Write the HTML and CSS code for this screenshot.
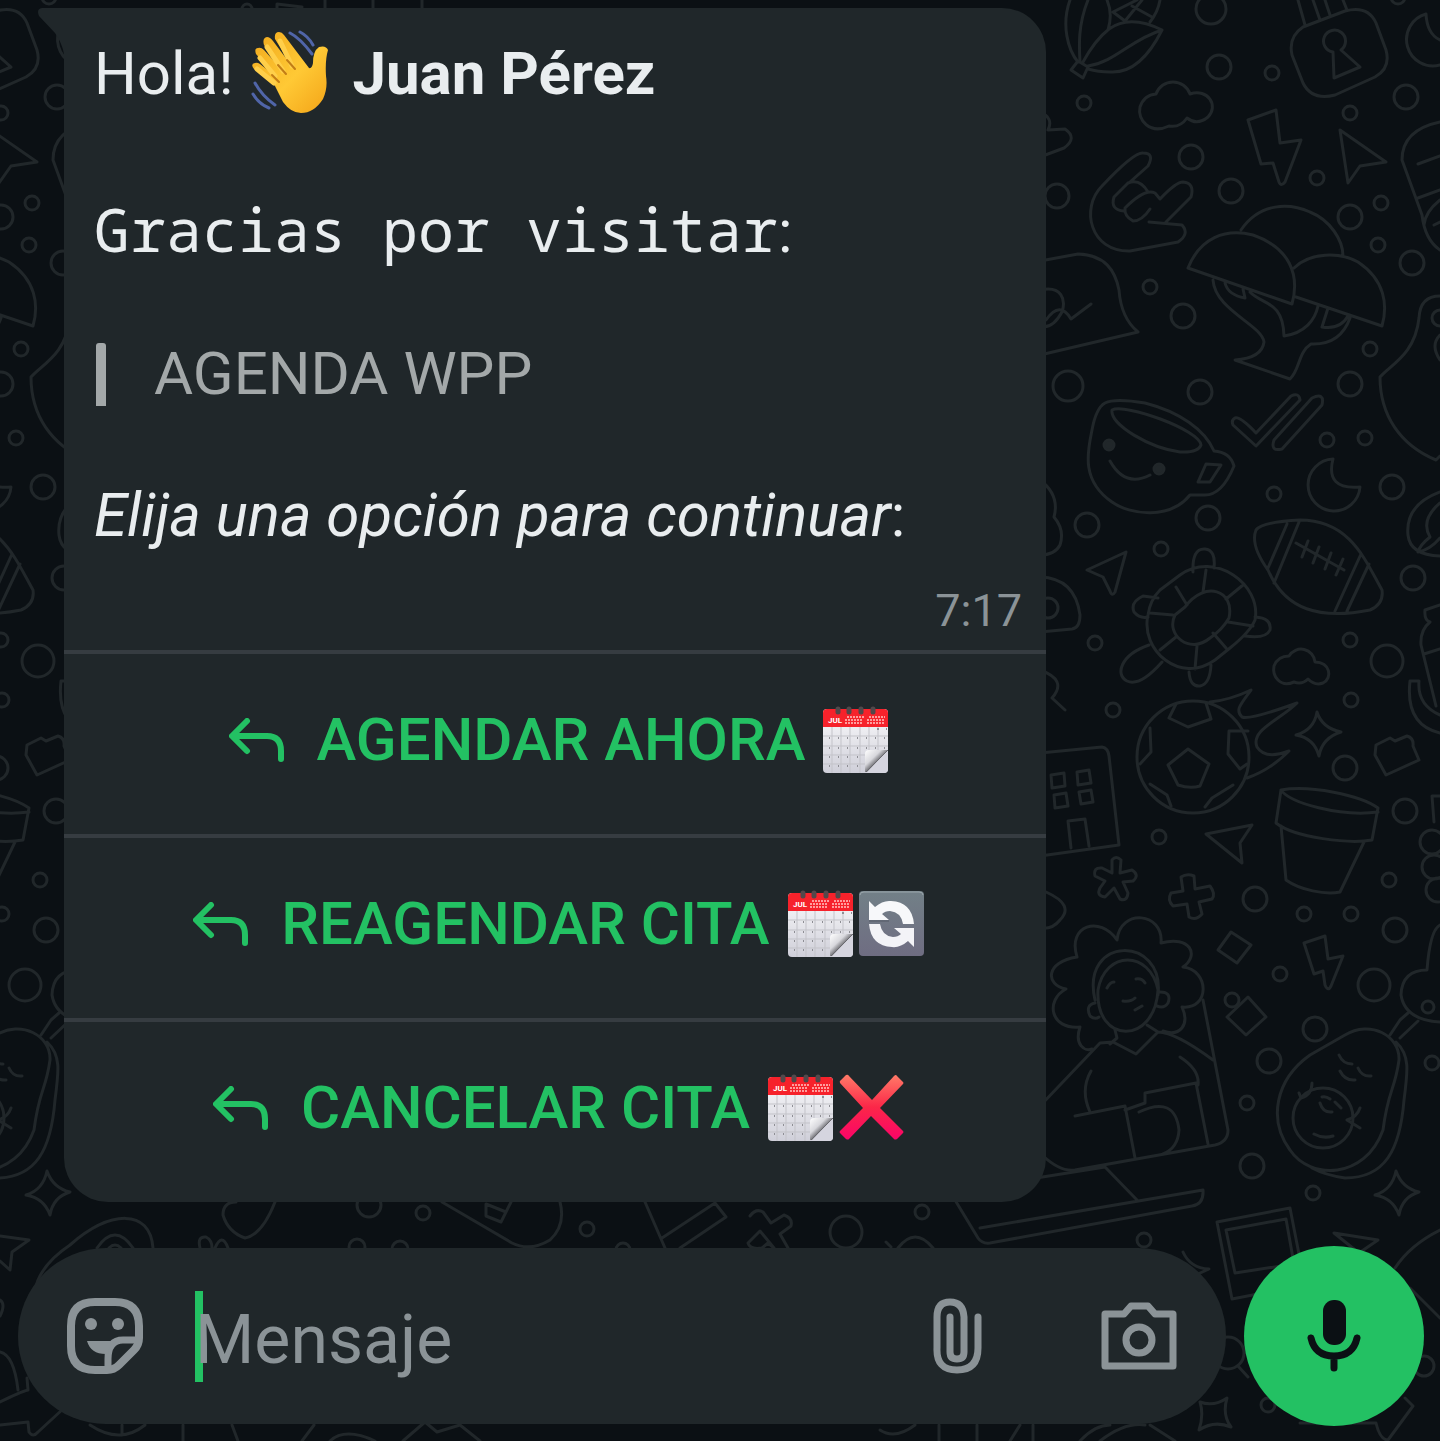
FILE: index.html
```html
<!DOCTYPE html>
<html lang="es">
  <head>
    <meta charset="UTF-8">
    <meta name="viewport" content="width=device-width, initial-scale=1.0">
    <title>Agenda WPP</title>
    <link rel="stylesheet" href="styles.css">
  </head>
  <body>
    <!-- wallpaper doodles -->
    <svg class="wallpaper" viewBox="0 0 1440 1441" preserveAspectRatio="xMinYMin slice" aria-hidden="true">
      <g id="doodles">
        <g>
          <circle cx="1211" cy="9" r="15"/><circle cx="1219" cy="67" r="12"/><circle cx="1272" cy="73" r="7"/><circle cx="1084" cy="103" r="7"/>
          <circle cx="1191" cy="157" r="12"/><circle cx="1406" cy="97" r="12"/><circle cx="1350" cy="113" r="7"/><circle cx="1317" cy="178" r="7"/>
          <circle cx="1231" cy="191" r="12"/><circle cx="1381" cy="203" r="7"/><circle cx="1350" cy="217" r="12"/><circle cx="1378" cy="245" r="7"/>
          <circle cx="1412" cy="263" r="12"/><circle cx="1057" cy="196" r="12"/><circle cx="1150" cy="287" r="7"/><circle cx="1183" cy="316" r="12"/>
          <circle cx="1370" cy="349" r="7"/><circle cx="1068" cy="386" r="15"/><circle cx="1200" cy="392" r="12"/><circle cx="1350" cy="384" r="12"/>
          <circle cx="1327" cy="440" r="7"/><circle cx="1365" cy="438" r="7"/><circle cx="1392" cy="487" r="12"/><circle cx="1274" cy="494" r="7"/>
          <circle cx="1208" cy="518" r="12"/><circle cx="1087" cy="525" r="12"/><circle cx="1161" cy="549" r="7"/><circle cx="1413" cy="578" r="12"/>
          <circle cx="1350" cy="640" r="7"/><circle cx="1387" cy="661" r="16"/><circle cx="1095" cy="643" r="7"/><circle cx="1113" cy="710" r="7"/>
          <circle cx="1351" cy="700" r="7"/><circle cx="1345" cy="768" r="12"/><circle cx="1159" cy="837" r="7"/><circle cx="1405" cy="811" r="12"/>
          <circle cx="1389" cy="880" r="7"/><circle cx="1255" cy="899" r="12"/><circle cx="1304" cy="914" r="7"/><circle cx="1351" cy="914" r="7"/>
          <circle cx="1395" cy="930" r="12"/><circle cx="1280" cy="974" r="7"/><circle cx="1374" cy="985" r="16"/><circle cx="1315" cy="1029" r="12"/>
          <circle cx="1269" cy="1061" r="12"/><circle cx="1247" cy="1103" r="7"/><circle cx="1252" cy="1166" r="12"/><circle cx="1313" cy="1193" r="7"/>
          <circle cx="1432" cy="1063" r="7"/><circle cx="1398" cy="-3" r="7"/>
        </g>
        <!-- corn, padlock, moon, cloud -->
        <path d="M1070 0C1061 25 1068 50 1078 62M1088 0C1078 25 1079 45 1080 62M1083 62Q1095 40 1109 29Q1130 14 1162 30Q1140 74 1110 72Q1098 72 1088 69M1088 66C1115 62 1130 40 1162 30M1107 0Q1113 14 1108 30M1078 61l10 6-5 11-12-8zM1160 0Q1158 12 1150 22M1137 0l-24 12 12 9L1142 0M1132 6l20 11"/>
        <path d="M1303 27l42-16Q1368 5 1376 23l10 27Q1391 68 1375 77l-40 18Q1312 101 1303 83l-11-28Q1288 37 1303 27zM1298 0l7 25M1313 0l7 20M1325 0l5 15M1343 0l4 10M1333 52l1 26 26-11-19-17A11 11 0 1 0 1333 52"/>
        <path d="M1440 65A26 26 0 1 1 1426 14Q1427 34 1440 40"/>
        <path d="M1156 94A18 18 0 0 1 1190 94C1208 88 1219 106 1208 117Q1197 126 1187 118Q1180 128 1169 126C1150 135 1137 120 1140 107Q1144 95 1156 94z"/>
        <!-- bolt, pointer, horns hand -->
        <path d="M1248 120l28-10 4 33 21-3-16 42Q1281 187 1279 182l-6-19-12 1zM1340 130l46 32-26 4-12 17z"/>
        <path d="M1130 182l18-16Q1155 153 1143 153Q1134 152 1102 186C1080 208 1090 252 1130 251l48-9Q1190 234 1182 225l-33-3M1166 222l25-25Q1195 183 1183 182Q1176 182 1160 199l-5-6Q1145 188 1125 208Q1124 216 1133 221Q1142 221 1150 209M1148 192Q1140 178 1128 183l-14 14Q1110 210 1124 211"/>
        <!-- mushrooms, hat, edges -->
        <path d="M1188 268C1200 238 1225 228 1253 235C1290 248 1300 275 1292 304zM1241 230C1260 202 1290 203 1310 212C1330 220 1343 240 1343 256M1294 268C1310 252 1340 252 1358 262C1385 280 1388 305 1382 326l-86-29M1213 280C1215 310 1262 325 1264 342Q1262 358 1235 360l55 19C1300 370 1298 352 1311 344C1335 345 1345 332 1350 318M1250 292C1262 305 1283 300 1284 336C1305 333 1315 320 1318 306M1225 283Q1228 295 1245 298l-2-9M1328 308l-6 19Q1340 330 1348 316"/>
        <path d="M1040 261l38-7C1105 255 1115 270 1119 290Q1121 318 1138 332l-98 23M1040 290C1062 285 1066 300 1062 312Q1052 330 1040 326M1046 320Q1060 300 1071 319l20-15M1040 112Q1054 118 1048 130l17-1Q1078 138 1064 148l-24 9"/>
        <path d="M1440 122Q1402 130 1402 160l20 55Q1425 240 1440 250M1418 164l22-8M1418 198l22-8M1440 200Q1425 212 1424 225M1434 225l6-3M1440 296Q1420 296 1419 318C1415 355 1390 365 1380 377C1380 415 1400 445 1436 460l4-4M1440 310a8 8 0 0 0 0 16M1440 335q-10 10 0 25"/>
        <!-- smiling cup -->
        <path d="M1105 403Q1115 398 1145 403C1180 412 1205 430 1214 451Q1230 452 1234 466Q1222 495 1205 495h-15C1170 520 1130 515 1112 502C1080 480 1088 450 1092 430Q1096 408 1105 403zM1112 410C1125 403 1200 430 1201 445Q1198 453 1180 452C1150 448 1110 425 1112 410zM1206 464l15 1-11 17h-12zM1110 461Q1125 488 1150 475"/>
        <circle class="dot" cx="1109" cy="445" r="5"/><circle class="dot" cx="1159" cy="469" r="5"/>
        <!-- ticks, moon, pointer -->
        <path d="M1235 418Q1240 416 1256 433l35-37Q1299 392 1300 400l-44 46-23-21Q1231 420 1235 418zM1312 398l-38 42Q1270 452 1282 449l40-44Q1325 392 1312 398zM1333 459A26 26 0 1 0 1360 487Q1325 490 1333 459zM1087 570l39-18-11 40Q1112 597 1110 591l-7-14z"/>
        <!-- turtle -->
        <path d="M1160 590l20-15C1215 550 1262 585 1255 620Q1250 632 1230 648l-15 12C1180 685 1140 650 1148 615Q1150 600 1160 590zM1185 607C1205 580 1235 590 1229 618Q1222 630 1210 638C1190 655 1165 635 1175 615zM1206 570l-3 22M1176 587l11 18M1150 613l23 2M1160 650l16-13M1195 669l2-23M1226 648l-13-15M1253 626l-25-4M1243 585l-17 14M1193 572Q1192 548 1205 549Q1216 550 1214 568M1158 598l-15-2Q1130 602 1134 612Q1140 619 1148 617M1255 617Q1272 618 1270 630Q1266 639 1245 636M1149 645C1120 655 1115 675 1127 681Q1140 687 1162 662M1189 672Q1190 687 1200 686Q1210 684 1211 665"/>
        <!-- rugby ball, cloud -->
        <path d="M1256 530Q1262 522 1300 520C1350 520 1365 560 1382 590Q1384 604 1370 610C1320 620 1285 610 1268 570Q1250 545 1256 530zM1287 524l-19 44M1299 522l-25 61M1361 554l-26 57M1369 564l-22 47M1296 543l48 27M1308 541l-6 16M1319 547l-6 16M1331 553l-6 16M1343 559l-7 16"/>
        <path d="M1289 656A14 14 0 0 1 1315 662C1330 662 1333 678 1323 683Q1315 686 1308 679Q1302 685 1294 682C1280 688 1272 676 1274 666Q1278 656 1289 656z"/>
        <!-- football on fire -->
        <circle cx="1193" cy="757" r="56"/>
        <path d="M1210 702Q1230 700 1251 690C1240 705 1235 710 1242 717Q1250 720 1297 703C1280 720 1250 730 1257 747Q1265 760 1289 751Q1270 770 1247 778M1188 749l21 15-9 22Q1190 789 1178 785l-10-20zM1176 704l-7 14 19 9 23-8-5-16M1150 728l1 24-11 12M1248 731h-19l-1 23 12 15 7-5M1150 784l17 11 4 11M1205 807l7-9 21-13"/>
        <path d="M1317 712Q1322 728 1341 732Q1322 738 1319 756Q1314 738 1296 735Q1314 730 1317 712zM1376 745l14-7 5 3 12-5Q1414 738 1413 746l6 14-33 15-11-20z"/>
        <!-- building and bits by the bubble -->
        <path d="M1040 753l62-6Q1108 748 1109 756l10 89-79 11M1051 775l13-2 1 13-13 2zM1077 772l12-2 2 13-13 2zM1054 795l12-2 2 13-13 2zM1079 792l12-2 2 12-12 2zM1071 848l-3-27 17-2 4 27M1040 480Q1060 495 1054 517Q1065 530 1060 545Q1055 555 1040 555M1040 577Q1075 578 1080 615Q1080 628 1072 629l-32 3M1040 670Q1068 680 1052 698l13 12M1046 892Q1075 905 1060 920Q1052 930 1040 928"/>
        <circle cx="1048" cy="608" r="10"/>
        <path d="M1425 610l15-5M1425 610Q1424 620 1430 622Q1420 630 1421 645l15 61M1424 654l16-5M1410 681h9Q1417 705 1440 715M1410 681Q1405 725 1440 733M1440 492Q1405 505 1408 535Q1410 555 1440 556M1440 503Q1420 520 1430 537Q1420 545 1418 552Q1430 550 1440 538"/>
        <!-- flowerpot, pointer, asterisk, plus -->
        <path d="M1281 790C1310 785 1360 795 1378 808l-6 32C1350 844 1295 838 1276 823zM1281 790C1290 803 1340 817 1378 812M1281 826l5 54C1300 890 1325 895 1340 892l24-50M1206 834l46-9-12 18 2 20z"/>
        <path d="M1112 860Q1116 855 1121 860l-1 13 12-3Q1140 875 1133 881l-10 1 5 11Q1127 902 1120 899l-6-11-9 9Q1096 896 1100 888l5-7-10-5Q1093 867 1102 868l10 5zM1181 877Q1187 873 1194 876l1 13 15-3Q1216 894 1212 899l-13 3 3 12Q1196 921 1189 917l-2-13-14 2Q1167 900 1171 893l12-2z"/>
        <path d="M1231 932l20 13-14 18-19-13zM1304 943l21-7 3 23 15-3-12 30Q1328 992 1325 985l-2-14-9 3zM1248 997l18 20-20 18-19-18z"/>
        <circle cx="1232" cy="1000" r="7"/><circle cx="1432" cy="842" r="12"/><circle cx="1434" cy="867" r="12"/><circle cx="1438" cy="890" r="12"/>
        <path d="M1440 796h-8l2 26"/>
        <!-- woman with laptop -->
        <path d="M1077 957C1067 925 1100 915 1117 940C1120 908 1164 912 1161 943C1190 935 1200 955 1183 967C1210 970 1210 1010 1182 1007C1190 1025 1180 1037 1163 1031M1077 957C1045 962 1045 985 1066 989C1045 1000 1050 1030 1080 1027C1074 1045 1085 1052 1092 1049M1095 1000C1080 935 1165 935 1158 995M1098 990C1105 950 1150 950 1158 990M1098 990C1095 1045 1155 1045 1158 990M1095 1003q-10 2-5 13 5 4 9 1M1160 992q12 0 8 11-4 6-11 3M1107 988q3-6 7-6M1136 979q6-1 9 4M1123 1001q8 1 12-3M1135 1010l7-4"/>
        <path d="M1040 1106l60-63 13-1 23 12 22-22M1115 1030l2 8-7 6M1147 1025l11 7Q1175 1032 1213 1060M1203 1000l25 130Q1228 1142 1215 1145l-140 25Q1060 1172 1042 1155M1075 1116l50-10 10 52M1125 1110l20-7v-10l51-10 12 61M1139 1112Q1175 1095 1179 1130Q1178 1148 1163 1154M1180 1057Q1200 1070 1198 1085M1091 1071Q1080 1090 1090 1112M1030 1179l75-12 32 33M980 1228l223-38Q1204 1204 1192 1206l-202 37Q982 1244 978 1238l-23-38"/>
        <!-- avocado -->
        <path d="M1310 1055l35-20C1370 1020 1400 1035 1399 1060C1395 1090 1388 1090 1383 1130C1365 1180 1310 1180 1290 1150C1268 1120 1275 1080 1310 1055zM1396 1042C1410 1055 1408 1070 1404 1100C1400 1150 1385 1178 1345 1178Q1325 1175 1312 1168M1390 1035l10-15 8-7M1400 1038l18-17M1339 1055q4 9 13 9M1340 1071q5 10 15 9M1358 1068q4 9 13 8M1312 1083q0 12-11 15l-2-5M1360 1108q-3 9-13 12l13 8M1320 1103q3 10 12 9M1322 1097q4-1 8 2M1335 1102l6 6M1314 1134q9 5 19 2"/>
        <circle cx="1323" cy="1118" r="30"/><circle cx="1428" cy="1007" r="6"/>
        <path d="M1440 925Q1430 930 1427 970Q1402 970 1401 995Q1405 1020 1440 1022M1396 1171Q1402 1188 1419 1192Q1402 1197 1399 1215Q1393 1198 1375 1195Q1392 1190 1396 1171z"/>
      </g>
      <use href="#doodles" x="-1349"/>
      <!-- strip round the composer -->
      <path d="M1217 1222l73-14 15 77-73 14zM1226 1230l60-11 8 45-59 9zM1334 1233l44 7-19 13zM1440 1230Q1410 1245 1395 1268M1410 1288l30 30M1183 1252Q1190 1268 1209 1269l-11 5M1238 1366l10 11M1200 1402Q1214 1407 1227 1398Q1222 1415 1231 1427Q1214 1420 1199 1430Q1204 1415 1200 1402zM1300 1423h76Q1380 1440 1388 1440l25-34-8-8"/>
      <path d="M898 1248Q915 1226 933 1248M886 1242l5 5M750 1216Q756 1208 763 1212l8 11 13-8Q793 1218 791 1226l-11 8 8 14M774 1248l-6-5-6 5Q750 1250 748 1243l12-12zM645 1202l20 46M662 1238l53-35 11 14-46 31M442 1202l70 41Q530 1252 550 1240Q566 1225 560 1202M486 1204l20 8-5 10-15-6zM506 1212l5-10M236 1202Q223 1202 223 1215Q228 1232 245 1238Q262 1235 275 1202"/>
      <path d="M35 1290Q40 1265 70 1245C110 1210 150 1208 153 1248M97 1248Q115 1222 133 1248M109 1248q6-6 12 0M200 1248Q197 1236 206 1237Q212 1240 212 1248M215 1248Q222 1232 228 1248M0 1236l29 4-17 12-2 18-10-9M0 1352Q14 1355 18 1390M0 1300q6 4 0 16M0 1402Q20 1392 28 1390l-1-12M0 1425l28-3 1 10Q33 1438 38 1432l25-23"/>
      <path d="M90 1425Q120 1445 145 1425M122 1425v10M183 1425v16M232 1425l6 16M314 1425l-12 16M330 1441Q345 1427 375 1441M403 1441l22-19 12 10 23-7 20 16M880 1430Q895 1440 915 1425M939 1425v16M977 1425v16M1020 1425l-10 16M1033 1425v16M1080 1441Q1095 1425 1110 1425M1100 1441Q1125 1422 1145 1425M1150 1425l25 16M277 8V4l25 3M325 0v8M373 0v8M422 0v8"/>
      <circle cx="587" cy="1229" r="7"/><circle cx="846" cy="1232" r="16"/><circle cx="922" cy="1212" r="7"/><circle cx="623" cy="1250" r="7"/>
      <circle cx="369" cy="1205" r="12"/><circle cx="423" cy="1213" r="7"/><circle cx="357" cy="1247" r="8"/><circle cx="400" cy="1249" r="8"/>
      <circle cx="1228" cy="1353" r="16"/><circle cx="1268" cy="1405" r="7"/><circle cx="1424" cy="1366" r="10"/><circle cx="1144" cy="1240" r="7"/><circle cx="247" cy="9" r="5"/>
    </svg>

    <!-- shared pictures -->
    <svg class="defs" aria-hidden="true">
      <defs>
        <linearGradient id="skin" x1="0" y1="0" x2="1" y2="1">
          <stop offset="0" stop-color="#f0a81c"/><stop offset=".55" stop-color="#ffc935"/><stop offset="1" stop-color="#f3a317"/>
        </linearGradient>
        <linearGradient id="paper" x1="0" y1="0" x2="0" y2="1">
          <stop offset="0" stop-color="#fbfbfc"/><stop offset="1" stop-color="#cfcfd9"/>
        </linearGradient>
        <linearGradient id="curl" x1="0" y1="0" x2="1" y2="1">
          <stop offset="0" stop-color="#fff"/><stop offset=".35" stop-color="#d8d8dd"/><stop offset=".52" stop-color="#77777c"/>
        </linearGradient>
        <linearGradient id="steel" x1="0" y1="0" x2="0" y2="1">
          <stop offset="0" stop-color="#728087"/><stop offset="1" stop-color="#6f6d82"/>
        </linearGradient>
        <linearGradient id="red" x1="0" y1="0" x2="0" y2="1">
          <stop offset="0" stop-color="#ff7b68"/><stop offset=".5" stop-color="#fb2748"/><stop offset="1" stop-color="#fa0468"/>
        </linearGradient>
        <symbol id="reply" viewBox="0 0 56 44">
          <path d="M18 3L3 18l15 15M4 18h34q14 0 14 15v8" fill="none" stroke="currentColor" stroke-width="6" stroke-linecap="round" stroke-linejoin="round"/>
        </symbol>
        <symbol id="calendar" viewBox="0 0 66 68">
          <rect x="0" y="3" width="65" height="64" rx="4" fill="url(#paper)"/>
          <path d="M0 21V7q0-4 4-4h57q4 0 4 4v14z" fill="#f6222b"/>
          <path d="M9 21v46M18 21v46M27 21v46M37 21v46M46 21v46M55 21v46M0 30h65M0 40h65M0 49h65M0 58h65" stroke="#c3c3c9" stroke-width="1"/>
          <path d="M54 23h2M63 23h1M6 32h1M15 32h1M24 32h1M34 32h1M43 32h1M52 32h1M61 32h1M6 42h1M15 42h1M24 42h1M34 42h1M43 42h1M52 42h1M61 42h1M6 51h1M15 51h1M24 51h1M34 51h1M6 60h1M15 60h1M24 60h1M34 60h1" stroke="#8e8e94" stroke-width="2"/>
          <path d="M24 11h17M22 14h18M22 17h18M46 11h16M44 14h17M44 17h17" stroke="#ff9d9d" stroke-width="2" stroke-dasharray="2 1"/>
          <path d="M42 66V48q0-4 4-4h19L48 66z" fill="url(#curl)"/>
          <path d="M65 44v19q0 4-4 4H43z" fill="#d5d5df"/>
          <path d="M65 44L43 66" stroke="#69696e" stroke-width="1"/>
          <path d="M15 3v3M26 3v3M38 3v3M50 3v3" stroke="#52484b" stroke-width="5" stroke-linecap="round"/>
        </symbol>
        <symbol id="refresh" viewBox="0 0 66 68">
          <rect x="0" y="1" width="65" height="65" rx="4" fill="url(#steel)"/>
          <path d="M1 5q0-3 4-3h55q4 0 4 3" fill="none" stroke="#9aa6ab" stroke-width="1"/>
          <path d="M10 11l6 6Q24 10 32 11 53 12 55 34H44Q42 22 31 21q-5 0-8 3l7 6H10z" fill="#f7f8fa"/>
          <path d="M55 57l-6-6Q41 58 33 57 12 56 10 34H21Q23 46 34 47q5 0 8-3l-7-6H55z" fill="#f3f3f7"/>
          <path d="M10 31h20" stroke="#555a66" stroke-width="1"/>
        </symbol>
        <symbol id="cross" viewBox="0 0 66 68">
          <path d="M1 9Q0 7 2 6l5-5q2-1 3 1l23 24L55 2q2-2 3 0l6 6q1 1 0 2L41 34l23 23q1 1 0 2l-6 6q-2 1-3 0L32 42 10 65q-1 1-3 0l-6-6q-1-1 0-2l23-23z" fill="url(#red)"/>
        </symbol>
      </defs>
    </svg>

    <main class="chat">
      <article class="bubble">
        <svg class="tail" viewBox="0 0 30 46" aria-hidden="true"><path d="M4 0h26v46h-4Q24 35 17 25L1 8Q-2 1 4 0z"/></svg>
        <div class="message">
          <p class="greeting">Hola!
            <svg class="wave" viewBox="0 0 78 84" role="img" aria-label="saludo">
              <path d="M39 3q10 5 22 21M49 2q8 4 13 13M4 53q7 13 20 22M2 64q6 10 16 14" fill="none" stroke="#5065a8" stroke-width="3" stroke-linecap="round"/>
              <path d="M23 54L3 39Q-1 34 4 33 6 32 9 34l15 12L5 24Q3 18 7 18q3-1 6 2l18 20L13 15Q11 8 16 7q3 0 6 4l18 24L24 9Q23 2 28 2q3 0 5 3l25 33q3 1 4-5 0-12 6-16 7-2 9 3-3 10-2 26 2 12-3 23Q63 83 50 83 40 83 32 72z" fill="url(#skin)"/>
              <path d="M23 53L6 39M24 46L9 28M32 41L16 17M41 36L29 11" fill="none" stroke="#ffcf4a" stroke-width="5" stroke-linecap="round"/>
              <path d="M21 45l7 7M27 35l8 9M36 30l8 9" fill="none" stroke="#c27d16" stroke-width="2" stroke-linecap="round"/>
            </svg>
            <strong>Juan Pérez</strong></p>
          <p><code>Gracias por visitar</code>:</p>
          <blockquote>AGENDA WPP</blockquote>
          <p><em>Elija una opción para continuar</em>:</p>
        </div>
        <time class="time">7:17</time>
        <div class="replies">
          <button type="button">
            <svg class="arrow" aria-hidden="true"><use href="#reply"/></svg>
            <span>AGENDAR AHORA</span>
            <span class="emojis"><svg aria-hidden="true"><use href="#calendar"/><text class="month" x="5" y="17">JUL</text></svg></span>
          </button>
          <button type="button">
            <svg class="arrow" aria-hidden="true"><use href="#reply"/></svg>
            <span>REAGENDAR CITA</span>
            <span class="emojis"><svg aria-hidden="true"><use href="#calendar"/><text class="month" x="5" y="17">JUL</text></svg><svg aria-hidden="true"><use href="#refresh"/></svg></span>
          </button>
          <button type="button">
            <svg class="arrow" aria-hidden="true"><use href="#reply"/></svg>
            <span>CANCELAR CITA</span>
            <span class="emojis"><svg aria-hidden="true"><use href="#calendar"/><text class="month" x="5" y="17">JUL</text></svg><svg aria-hidden="true"><use href="#cross"/></svg></span>
          </button>
        </div>
      </article>

      <form class="composer">
        <div class="field">
          <button type="button" class="icon" aria-label="Stickers">
            <svg width="76" height="76" viewBox="0 0 76 76" fill="none" stroke="currentColor" stroke-width="8" stroke-linejoin="round">
              <path d="M28 4h20q24 0 24 24v12q0 7-5 12L52 67q-5 5-12 5H28Q4 72 4 48V28Q4 4 28 4z"/>
              <path d="M41 72V61q0-19 15-19h16" stroke-width="7"/>
              <path d="M20 43h28q-6 5-7 13Q24 57 20 43z" fill="currentColor" stroke="none"/>
              <circle cx="24" cy="26" r="6" fill="currentColor" stroke="none"/>
              <circle cx="51" cy="26" r="6" fill="currentColor" stroke="none"/>
            </svg>
          </button>
          <label class="entry">
            <input type="text" placeholder="Mensaje" aria-label="Mensaje">
          </label>
          <button type="button" class="icon clip" aria-label="Adjuntar">
            <svg width="50" height="76" viewBox="0 0 50 76" fill="none" stroke="currentColor" stroke-width="7" stroke-linecap="round">
              <path d="M45 19v31q0 22-21 22T4 50V19Q4 4 17 4t14 15v35q0 7-7 7t-7-7V19"/>
            </svg>
          </button>
          <button type="button" class="icon" aria-label="Cámara">
            <svg width="76" height="68" viewBox="0 0 76 68" fill="none" stroke="currentColor" stroke-width="7" stroke-linejoin="round">
              <path d="M4 12h19l7-8h17l7 8h18v52H4z"/>
              <circle cx="38" cy="38" r="13"/>
            </svg>
          </button>
        </div>
        <button type="button" class="mic" aria-label="Grabar audio">
          <svg width="54" height="72" viewBox="0 0 54 72" fill="none" stroke="currentColor" stroke-width="7" stroke-linecap="round">
            <rect x="16" y="0" width="23" height="45" rx="11" fill="currentColor" stroke="none"/>
            <path d="M4 38q4 18 23 18t23-18M27 57v11"/>
          </svg>
        </button>
      </form>
    </main>
  </body>
</html>
```

FILE: styles.css
```css
* { box-sizing: border-box; }
body { margin: 0; background: #0b1014; color: #e9edef; font-family: Roboto, sans-serif; font-size: 60px; line-height: 72px; }
button { border: none; background: none; padding: 0; font: inherit; cursor: pointer; }
.defs { position: absolute; width: 0; height: 0; }

.wallpaper { position: absolute; top: 0; left: 0; width: 100%; height: 100%; fill: none; stroke: #21272a; stroke-width: 3; stroke-linejoin: round; stroke-linecap: round; }
.wallpaper .dot { fill: #21272a; }

.chat { position: relative; min-height: 100vh; display: flex; flex-direction: column; justify-content: space-between; gap: 44px; padding: 8px 16px 15px 18px; }

/* message bubble */
.bubble { position: relative; width: calc(100% - 92px); max-width: 982px; margin-left: 46px; background: #20272a; border-radius: 0 44px 44px 44px; display: flex; flex-direction: column; }
.tail { position: absolute; top: 0; left: -26px; width: 30px; height: 46px; fill: #20272a; }
.message { display: flex; flex-direction: column; gap: 70px; padding: 22px 30px 0; }
.message p, .message blockquote { margin: 0; }
.message .greeting { line-height: 88px; margin-bottom: 8px; }
.wave { width: 78px; height: 84px; vertical-align: -20px; margin: 0 9px 0 2px; }
code { font-family: "Noto Sans Mono", "DejaVu Sans Mono", monospace; font-size: 60px; line-height: 1; }
strong { font-weight: 700; }
blockquote { display: flex; align-items: center; gap: 48px; padding-left: 2px; color: #a3a8a9; }
blockquote::before { content: ""; width: 10px; height: 63px; border-radius: 3px 3px 0 0; background: #a3a8a9; }
.time { align-self: flex-end; padding: 32px 24px 12px; font-size: 45px; line-height: 54px; color: #8b9397; }

.replies { display: flex; flex-direction: column; }
.replies button { display: flex; align-items: center; justify-content: center; height: 184px; padding: 0 0 8px 8px; border-top: 4px solid #363c41; color: #23c163; font-weight: 500; }
.arrow { width: 56px; height: 44px; margin-right: 32px; }
.emojis { display: flex; gap: 5px; margin-left: 18px; }
.emojis svg { width: 66px; height: 68px; }
.month { font: 700 8px Roboto, sans-serif; fill: #fff; }

/* composer */
.composer { display: flex; align-items: center; gap: 18px; }
.field { flex: 1; min-width: 0; display: flex; align-items: center; height: 176px; padding: 0 49px; border-radius: 88px; background: #20272a; }
.icon { display: flex; flex: none; color: #8b9397; }
.entry { flex: 1; min-width: 0; display: flex; align-items: center; margin-left: 52px; }
.entry::before { content: ""; flex: none; width: 8px; height: 91px; margin-right: -8px; background: #23c163; }
.entry input { position: relative; width: 100%; min-width: 0; padding: 8px 0 0; border: none; outline: none; background: none; color: #e9edef; font: 400 68px/92px Roboto, sans-serif; }
.entry input::placeholder { color: #8b9397; opacity: 1; }
.clip { margin-right: 118px; }
.mic { flex: none; display: flex; align-items: center; justify-content: center; width: 180px; height: 180px; border-radius: 50%; background: #23c163; color: #0b1014; }
```
